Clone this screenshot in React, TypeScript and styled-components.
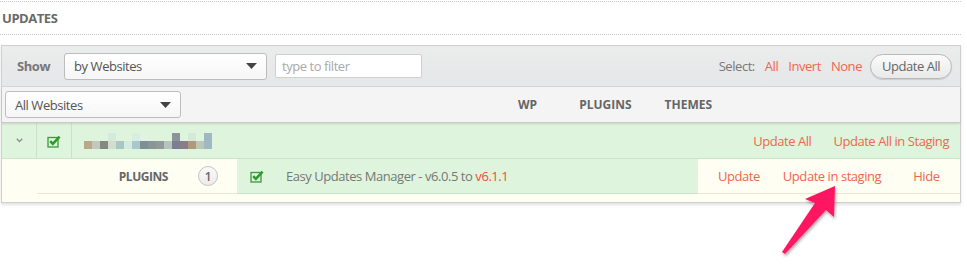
import styled, { createGlobalStyle } from 'styled-components';

const GlobalStyle = createGlobalStyle`
  html, body {
    margin: 0;
    padding: 0;
    background: #fff;
  }
  body {
    font-family: 'Open Sans', 'Liberation Sans', sans-serif;
    font-size: 13px;
    letter-spacing: -0.45px;
    color: #666;
  }
  * {
    box-sizing: border-box;
  }
`;

const LINK = '#f0664f';

const pixels: [number, string, string?][] = [
  [0, '#b8a98a'],
  [1, '#c4c8bc'],
  [2, '#858a80'],
  [3, '#d2ddcc', '#d3eadd'],
  [4, '#a9c6c6'],
  [5, '#d4ece0'],
  [6, '#a8c8cc', '#d8eee2'],
  [7, '#7f8f94', '#e2f2e4'],
  [8, '#8a9598'],
  [9, '#939b9a'],
  [10, '#b6c4bc'],
  [11, '#7a7d94', '#8a9499'],
  [12, '#8a7d8a'],
  [13, '#b09878', '#d4e8dc'],
  [14, '#bcc8b4'],
  [15, '#a0b8c4', '#a0b8c4'],
];

const CheckIcon = () => (
  <svg width="14" height="13" viewBox="0 0 14 13">
    <rect x="1" y="2.5" width="10" height="9.5" fill="none" stroke="#3d9a3d" strokeWidth="1.3" />
    <path d="M3.2 6.2 L5.8 8.8 L12.6 1.6" fill="none" stroke="#2f9a2f" strokeWidth="2.6" />
  </svg>
);

const Caret = () => (
  <svg width="11" height="6" viewBox="0 0 11 6">
    <path d="M0 0 H11 L5.5 6 Z" fill="#444" />
  </svg>
);

export default function App() {
  return (
    <Page>
      <GlobalStyle />
      <Heading>Updates</Heading>
      <Panel>
        <Toolbar>
          <ShowLabel>Show</ShowLabel>
          <Select $width={203}>
            by Websites
            <Caret />
          </Select>
          <FilterInput placeholder="type to filter" />
          <Spacer />
          <SelectLabel>Select:</SelectLabel>
          <ToolLink>All</ToolLink>
          <ToolLink>Invert</ToolLink>
          <ToolLink>None</ToolLink>
          <PillButton>Update All</PillButton>
        </Toolbar>
        <HeaderRow>
          <Select $width={176}>
            All Websites
            <Caret />
          </Select>
          <ColHead $left={337}>WP</ColHead>
          <ColHead $left={42}>Plugins</ColHead>
          <ColHead $left={33}>Themes</ColHead>
        </HeaderRow>
        <SiteRow>
          <ToggleCell>
            <svg width="7" height="5" viewBox="0 0 7 5">
              <path d="M0.8 0.8 L3.5 3.6 L6.2 0.8" fill="none" stroke="#888" strokeWidth="1.3" />
            </svg>
          </ToggleCell>
          <CheckCell>
            <CheckIcon />
          </CheckCell>
          <NameCell>
            {pixels.map(([i, bottom, top]) => (
              <PixelColumn key={i}>
                <Pixel style={{ background: top ?? 'transparent' }} />
                <Pixel style={{ background: bottom }} />
              </PixelColumn>
            ))}
          </NameCell>
          <RowActions>
            <ActionLink>Update All</ActionLink>
            <ActionLink>Update All in Staging</ActionLink>
          </RowActions>
        </SiteRow>
        <SiteBody>
          <DetailRow>
            <TypeCell>
              <TypeLabel>Plugins</TypeLabel>
              <Badge>1</Badge>
            </TypeCell>
            <ItemCell>
              <CheckIcon />
              <ItemText>
                Easy Updates Manager - v6.0.5 to <NewVersion>v6.1.1</NewVersion>
              </ItemText>
            </ItemCell>
            <ItemActions>
              <ActionLink>Update</ActionLink>
              <ActionLink>Update in staging</ActionLink>
              <ActionLink>Hide</ActionLink>
            </ItemActions>
          </DetailRow>
        </SiteBody>
      </Panel>
      <Arrow width="70" height="80" viewBox="0 0 70 80">
        <defs>
          <filter id="shadow" x="-30%" y="-30%" width="160%" height="160%">
            <feDropShadow dx="1" dy="2" stdDeviation="1.5" floodColor="#000" floodOpacity="0.35" />
          </filter>
        </defs>
        <path
          d="M56 4 L55 35 L47 28 L6 72 L3 70 L36 21 L26 17 Z"
          fill="#ff1464"
          filter="url(#shadow)"
        />
      </Arrow>
    </Page>
  );
}

const Page = styled.div`
  position: relative;
  width: 961px;
  padding-top: 1px;
  height: 272px;
`;

const Heading = styled.h2`
  margin: 0;
  padding: 8px 2px 7px;
  border-top: 1px dotted #c8c8c8;
  border-bottom: 1px dotted #c8c8c8;
  font-size: 13px;
  font-weight: 700;
  text-transform: uppercase;
  color: #6a6a6a;
  line-height: 17px;
`;

const Panel = styled.div`
  margin: 10px 0 0 1px;
  width: 960px;
  border: 1px solid #cfcfcf;
  box-shadow: 0 2px 3px rgba(0, 0, 0, 0.12);
`;

const Toolbar = styled.div`
  display: flex;
  align-items: center;
  height: 41px;
  padding: 0 8px 0 15px;
  background: linear-gradient(#ebecec, #e5e7e8);
  border-bottom: 1px solid #d6d6d6;
`;

const ShowLabel = styled.span`
  font-weight: 700;
  color: #777;
  margin-right: 14px;
`;

const Select = styled.div<{ $width: number }>`
  display: flex;
  align-items: center;
  justify-content: space-between;
  width: ${(p) => p.$width}px;
  height: 27px;
  padding: 0 9px 0 9px;
  border: 1px solid #bdbdbd;
  border-radius: 3px;
  background: linear-gradient(#fff, #f6f6f6);
  color: #555;
  font-size: 13px;
`;

const FilterInput = styled.input`
  margin-left: 8px;
  width: 147px;
  height: 24px;
  padding: 0 6px;
  border: 1px solid #cfcfcf;
  border-radius: 2px;
  font-family: inherit;
  font-size: 13px;
  letter-spacing: inherit;
  color: #555;
  &::placeholder {
    color: #a9a9a9;
  }
`;

const Spacer = styled.div`
  flex: 1;
`;

const SelectLabel = styled.span`
  color: #777;
  margin-right: 5px;
`;

const ToolLink = styled.a`
  color: ${LINK};
  margin: 0 5px;
  cursor: pointer;
`;

const PillButton = styled.button`
  margin-left: 3px;
  height: 25px;
  width: 82px;
  border: 1px solid #b9b9b9;
  border-radius: 13px;
  background: linear-gradient(#fbfbfb, #e9e9e9);
  box-shadow: 0 1px 1px rgba(0, 0, 0, 0.12);
  font-family: inherit;
  font-size: 13px;
  letter-spacing: inherit;
  color: #666;
  padding: 0;
`;

const HeaderRow = styled.div`
  display: flex;
  align-items: center;
  height: 36px;
  padding-left: 3px;
  background: #f4f4f4;
  border-bottom: 1px solid #c9c9c9;
  box-shadow: 0 1px 2px rgba(0, 0, 0, 0.12);
  position: relative;
`;

const ColHead = styled.span<{ $left: number }>`
  margin-left: ${(p) => p.$left}px;
  font-size: 12px;
  font-weight: 700;
  letter-spacing: 0;
  text-transform: uppercase;
  color: #666;
`;

const SiteRow = styled.div`
  display: flex;
  align-items: stretch;
  height: 36px;
  background: #dff4dd;
  border-bottom: 1px solid #cbe6c7;
`;

const ToggleCell = styled.div`
  width: 35px;
  display: flex;
  align-items: center;
  justify-content: center;
  border-right: 1px solid #c9e4c5;
`;

const CheckCell = styled.div`
  width: 35px;
  display: flex;
  align-items: center;
  justify-content: center;
  border-right: 1px solid #c9e4c5;
  padding-top: 1px;
`;

const NameCell = styled.div`
  display: flex;
  align-items: center;
  padding-left: 12px;
`;

const PixelColumn = styled.div`
  display: flex;
  flex-direction: column;
`;

const Pixel = styled.div`
  width: 8px;
  height: 8px;
`;

const RowActions = styled.div`
  margin-left: auto;
  display: flex;
  align-items: center;
  gap: 22px;
  padding-right: 11px;
`;

const ActionLink = styled.a`
  color: ${LINK};
  cursor: pointer;
`;

const SiteBody = styled.div`
  background: #fefef2;
  padding: 0 0 8px 35px;
`;

const DetailRow = styled.div`
  display: flex;
  height: 35px;
  border-bottom: 1px solid #e6ead2;
`;

const TypeCell = styled.div`
  width: 200px;
  display: flex;
  align-items: center;
  justify-content: flex-end;
  gap: 30px;
  padding-right: 19px;
`;

const TypeLabel = styled.span`
  font-size: 12px;
  font-weight: 700;
  text-transform: uppercase;
  color: #666;
`;

const Badge = styled.span`
  width: 20px;
  height: 20px;
  border-radius: 50%;
  border: 1px solid #c4c4c4;
  background: linear-gradient(#fafafa, #ececec);
  display: flex;
  align-items: center;
  justify-content: center;
  font-size: 12px;
  font-weight: 600;
  color: #666;
`;

const ItemCell = styled.div`
  width: 461px;
  display: flex;
  align-items: center;
  padding-left: 13px;
  background: #dff4dd;
  border-bottom: 1px solid #cbe6c7;
  margin-bottom: -1px;
`;

const ItemText = styled.span`
  margin-left: 22px;
  color: #777;
`;

const NewVersion = styled.span`
  color: #ee4e3a;
`;

const ItemActions = styled.div`
  display: flex;
  align-items: center;
  gap: 23px;
  padding-left: 20px;
  & > a:last-child {
    margin-left: 9px;
  }
`;

const Arrow = styled.svg`
  position: absolute;
  left: 779px;
  top: 182px;
`;
